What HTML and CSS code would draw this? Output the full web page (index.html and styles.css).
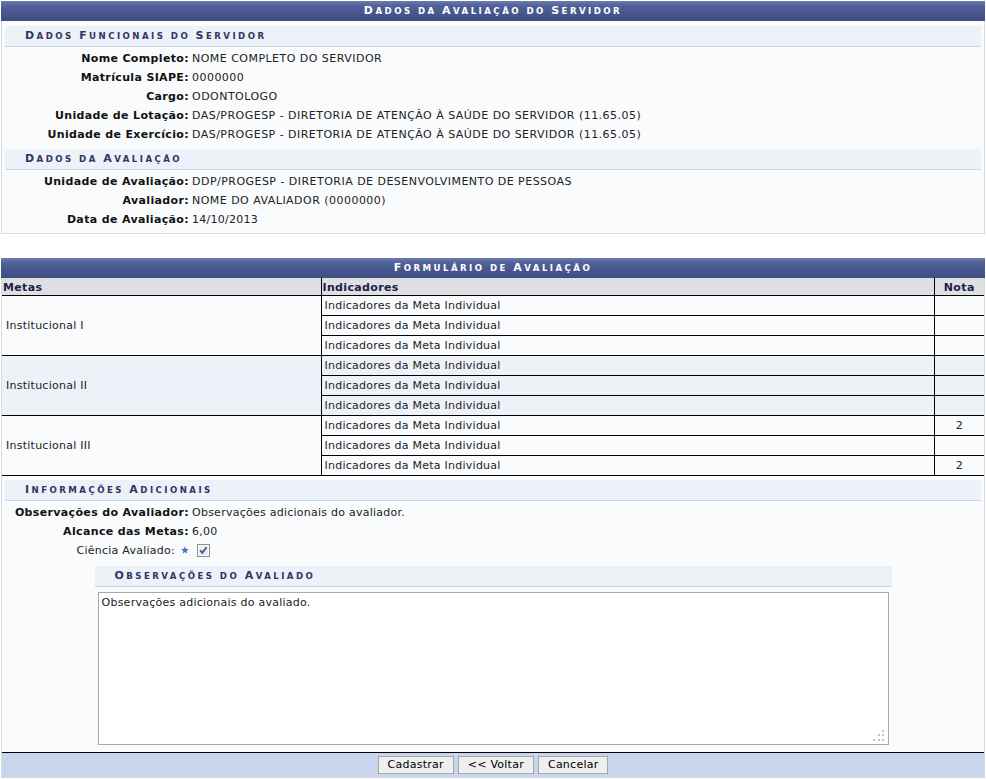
FILE: index.html
```html
<!DOCTYPE html>
<html lang="pt-BR">
<head>
<meta charset="utf-8">
<title>Dados da Avaliação do Servidor</title>
<link rel="stylesheet" href="styles.css">
</head>
<body>
<div class="page">
  <section class="panel panel-dados">
    <h1 class="caption"><span class="ini">D</span>ados da <span class="ini">A</span>valiação do <span class="ini">S</span>ervidor</h1>
    <h2 class="subhead"><span class="ini">D</span>ados <span class="ini">F</span>uncionais do <span class="ini">S</span>ervidor</h2>
    <dl class="fields">
      <dt>Nome Completo:</dt><dd class="caps">NOME COMPLETO DO SERVIDOR</dd>
      <dt>Matrícula SIAPE:</dt><dd class="caps">0000000</dd>
      <dt>Cargo:</dt><dd class="caps">ODONTOLOGO</dd>
      <dt>Unidade de Lotação:</dt><dd class="caps">DAS/PROGESP - DIRETORIA DE ATENÇÃO À SAÚDE DO SERVIDOR (11.65.05)</dd>
      <dt>Unidade de Exercício:</dt><dd class="caps">DAS/PROGESP - DIRETORIA DE ATENÇÃO À SAÚDE DO SERVIDOR (11.65.05)</dd>
    </dl>
    <h2 class="subhead"><span class="ini">D</span>ados da <span class="ini">A</span>valiação</h2>
    <dl class="fields">
      <dt>Unidade de Avaliação:</dt><dd class="caps">DDP/PROGESP - DIRETORIA DE DESENVOLVIMENTO DE PESSOAS</dd>
      <dt>Avaliador:</dt><dd class="caps">NOME DO AVALIADOR (0000000)</dd>
      <dt>Data de Avaliação:</dt><dd>14/10/2013</dd>
    </dl>
  </section>

  <section class="panel panel-form">
    <h1 class="caption"><span class="ini">F</span>ormulário de <span class="ini">A</span>valiação</h1>
    <table class="metas">
      <colgroup><col class="c-metas"><col class="c-ind"><col class="c-nota"></colgroup>
      <thead>
        <tr><th>Metas</th><th>Indicadores</th><th class="nota">Nota</th></tr>
      </thead>
      <tbody class="grp">
        <tr><td rowspan="3" class="meta">Institucional I</td><td>Indicadores da Meta Individual</td><td class="nota"></td></tr>
        <tr><td>Indicadores da Meta Individual</td><td class="nota"></td></tr>
        <tr><td>Indicadores da Meta Individual</td><td class="nota"></td></tr>
      </tbody>
      <tbody class="grp grp-alt">
        <tr><td rowspan="3" class="meta">Institucional II</td><td>Indicadores da Meta Individual</td><td class="nota"></td></tr>
        <tr><td>Indicadores da Meta Individual</td><td class="nota"></td></tr>
        <tr><td>Indicadores da Meta Individual</td><td class="nota"></td></tr>
      </tbody>
      <tbody class="grp">
        <tr><td rowspan="3" class="meta">Institucional III</td><td>Indicadores da Meta Individual</td><td class="nota">2</td></tr>
        <tr><td>Indicadores da Meta Individual</td><td class="nota"></td></tr>
        <tr><td>Indicadores da Meta Individual</td><td class="nota">2</td></tr>
      </tbody>
    </table>

    <h2 class="subhead subhead-info"><span class="ini">I</span>nformações <span class="ini">A</span>dicionais</h2>
    <dl class="fields">
      <dt>Observações do Avaliador:</dt><dd>Observações adicionais do avaliador.</dd>
      <dt>Alcance das Metas:</dt><dd>6,00</dd>
      <dt class="plain">Ciência Avaliado:<svg class="star" width="8" height="8" viewBox="0 0 10 10"><polygon points="5,0.3 6.3,3.6 9.8,3.8 7.1,6.1 8,9.6 5,7.6 2,9.6 2.9,6.1 0.2,3.8 3.7,3.6" fill="#3f73cf"/></svg></dt>
      <dd class="check-cell"><span class="checkbox" role="checkbox" aria-checked="true"><svg width="13" height="13" viewBox="0 0 13 13"><rect x="0.5" y="0.5" width="12" height="12" fill="#ececec" stroke="#8f8f8f"/><rect x="1.5" y="1.5" width="10" height="10" fill="none" stroke="#f8f8f8"/><path d="M3.2 6.4 L5.3 8.8 L9.6 3.2" fill="none" stroke="#3b4f96" stroke-width="1.7"/></svg></span></dd>
    </dl>

    <div class="obs">
      <h2 class="subhead"><span class="ini">O</span>bservações do <span class="ini">A</span>valiado</h2>
      <div class="textwrap">
        <textarea class="obs-text">Observações adicionais do avaliado.</textarea>
        <svg class="grip" width="12" height="12" viewBox="0 0 12 12"><g fill="#c4c4c4"><rect x="9" y="0" width="2" height="2"/><rect x="5" y="4" width="2" height="2"/><rect x="9" y="4" width="2" height="2"/><rect x="0" y="9" width="2" height="2"/><rect x="5" y="9" width="2" height="2"/><rect x="9" y="9" width="2" height="2"/></g></svg>
      </div>
    </div>

    <div class="actions">
      <button type="button">Cadastrar</button>
      <button type="button">&lt;&lt; Voltar</button>
      <button type="button">Cancelar</button>
    </div>
  </section>
</div>
</body>
</html>
```

FILE: styles.css
```css
* { box-sizing: border-box; }

body {
  margin: 0;
  padding: 1px;
  background: #fff;
  color: #222;
  font: 11px "DejaVu Sans", Verdana, sans-serif;
  letter-spacing: 0.25px;
}

.panel {
  border: 1px solid #d7d9de;
  background: #f9fbfd;
}

.panel-dados { padding-bottom: 4px; }
.panel-form { margin-top: 24px; }

/* small caps: initials at full size, the rest scaled down */
.caption,
.subhead {
  font-size: 8.6px;
  font-weight: bold;
  text-transform: uppercase;
  letter-spacing: 2.45px;
}

.ini { font-size: 11px; }

.caption {
  margin: -1px -1px 0;
  height: 20px;
  line-height: 20px;
  background: linear-gradient(#6e7caa 0%, #50609a 25%, #485890 55%, #3e4c7f 100%);
  color: #fff;
  text-align: center;
}

.subhead {
  margin: 5px 3px 0;
  height: 21px;
  padding-left: 20px;
  line-height: 20px;
  background: #edf1f8;
  border-bottom: 1px solid #c8d5ec;
  color: #333366;
}

.subhead-info { margin-top: 4px; }

.fields {
  display: grid;
  grid-template-columns: 187px 1fr;
  column-gap: 3px;
  margin: 2px 0 0;
}

.fields dt,
.fields dd {
  margin: 0;
  padding: 2px 0;
  line-height: 15px;
}

.fields dd.caps { letter-spacing: 0.47px; }

.fields dt {
  text-align: right;
  font-weight: bold;
  color: #111;
  letter-spacing: 0.35px;
}

.fields dt.plain { font-weight: normal; color: #222; letter-spacing: 0.25px; }

.star { margin-left: 6px; vertical-align: 0; }

.check-cell { display: flex; align-items: center; }
.checkbox { display: block; width: 13px; height: 13px; margin-left: 5px; }
.checkbox svg { display: block; }

/* Tabela de metas */
.metas {
  width: 100%;
  border-collapse: collapse;
  table-layout: fixed;
}

.c-metas { width: 319px; }
.c-nota { width: 50px; }

.metas th {
  height: 17px;
  padding: 3px 1px 0;
  background: #dedfe3;
  color: #1d1d48;
  font-weight: bold;
  text-align: left;
  letter-spacing: 0.35px;
  border-bottom: 1px solid #000;
}

.metas th + th { border-left: 1px solid #000; }
.metas th.nota { text-align: center; }

.metas td {
  height: 20px;
  padding: 0 3px;
  line-height: 15px;
  border-bottom: 1px solid #000;
}

.metas td + td { border-left: 1px solid #000; }
.metas td.meta { vertical-align: middle; padding-left: 4px; border-right: 1px solid #000; }
.metas td.nota { text-align: center; }

.grp { background: #f9fbfd; }
.grp-alt { background: #edf1f8; }

/* Observações do avaliado */
.obs {
  width: 797px;
  margin: 6px auto 0;
}

.obs .subhead { margin: 0; }

.textwrap {
  position: relative;
  margin: 5px 3px 0;
}

.obs-text {
  display: block;
  width: 100%;
  height: 153px;
  margin: 0;
  padding: 3px 3px;
  border: 1px solid #a9a9a9;
  background: #fff;
  color: #222;
  font: 11px "DejaVu Sans", Verdana, sans-serif;
  letter-spacing: 0.25px;
  line-height: 14px;
  resize: none;
}

.grip {
  position: absolute;
  right: 4px;
  bottom: 3px;
}

/* Rodapé */
.actions {
  display: flex;
  justify-content: center;
  align-items: center;
  gap: 4px;
  margin-top: 7px;
  height: 25px;
  border-top: 1px solid #000;
  background: #c8d5ec;
}

.actions button {
  height: 18px;
  padding: 0 9px;
  border: 1px solid #a6a6a6;
  background: #efefef;
  color: #000;
  font: 11px "DejaVu Sans", Verdana, sans-serif;
  letter-spacing: 0.25px;
  line-height: 14px;
}
```
